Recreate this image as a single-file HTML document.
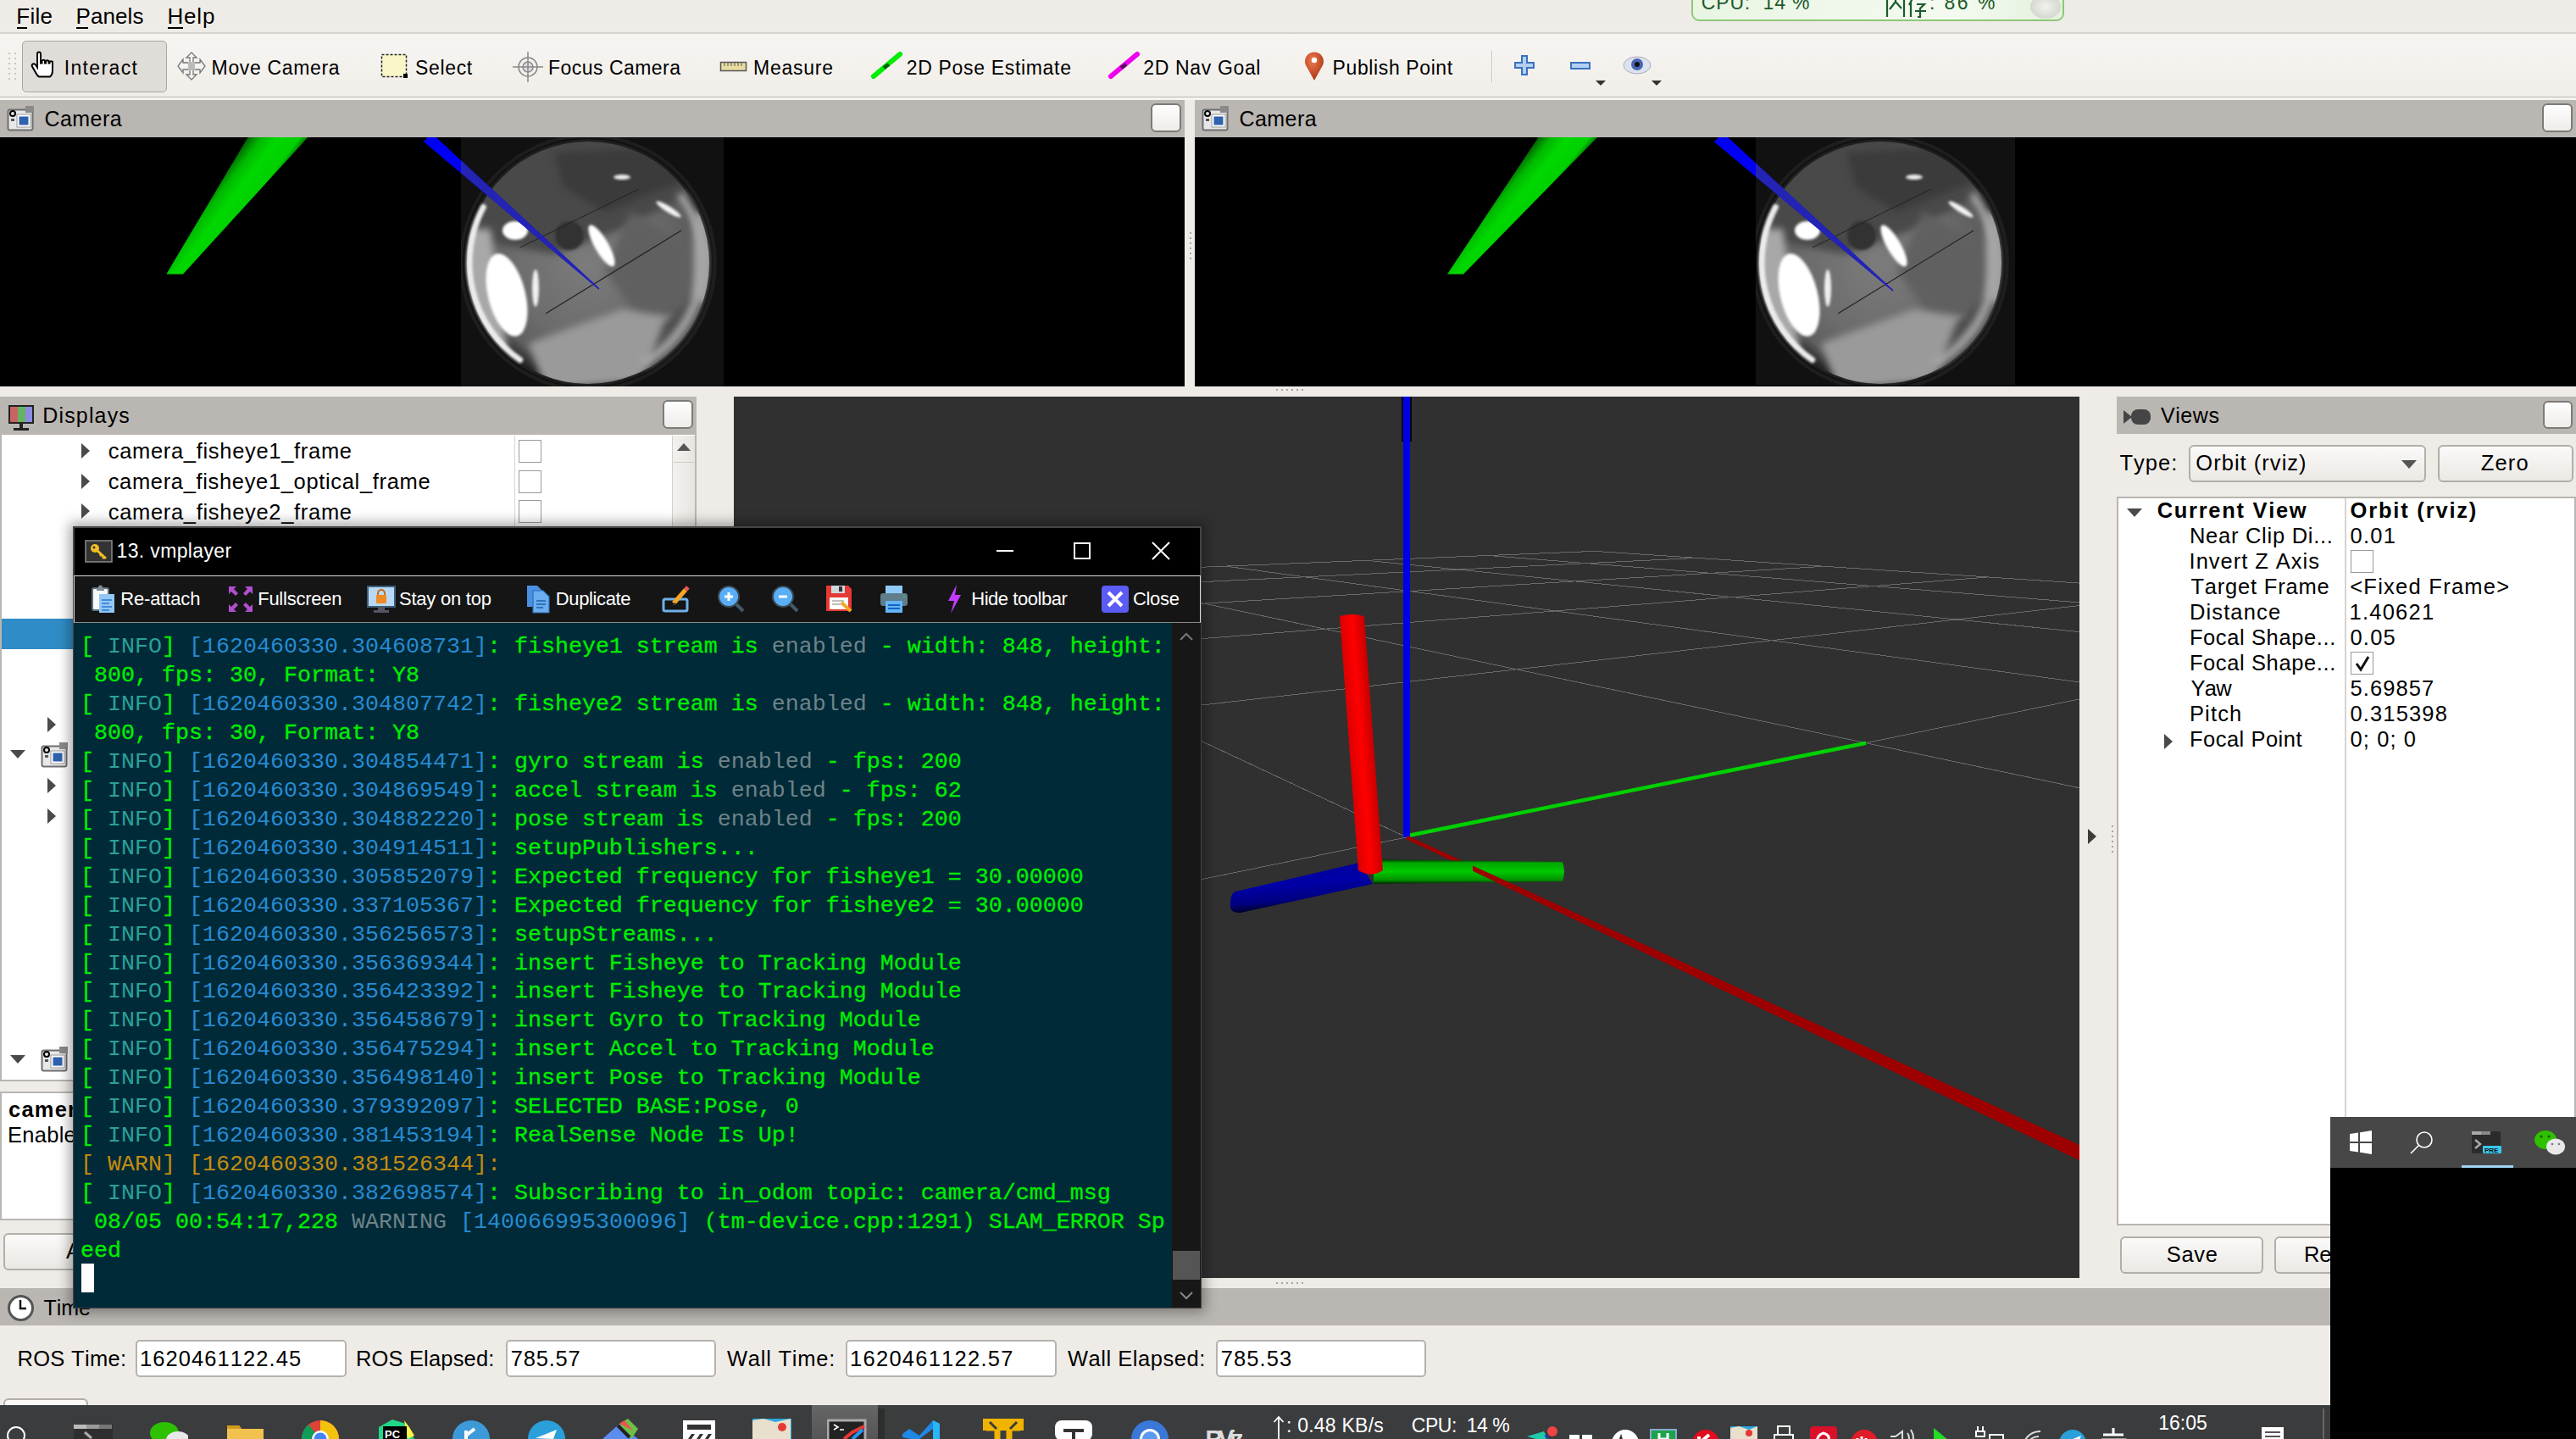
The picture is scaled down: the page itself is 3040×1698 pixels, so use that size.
<!DOCTYPE html>
<html><head><meta charset="utf-8"><style>
html,body{margin:0;padding:0;width:3040px;height:1698px;overflow:hidden;background:#efece8;font-family:'Liberation Sans', sans-serif}
.r{position:absolute;display:block}
.t{position:absolute;white-space:pre;font-kerning:none}
</style></head><body>
<div class="r" style="left:0px;top:0px;width:3040px;height:1698px;background:#efece8"></div><div class="r" style="left:0px;top:0px;width:3040px;height:38px;background:#efece8"></div><div class="r" style="left:0px;top:38px;width:3040px;height:2px;background:#d6d2cd"></div><div class="t" style="left:19.2px;top:6.0px;font-size:26px;line-height:26px;font-weight:400;color:#000;letter-spacing:0.33px;font-family:'Liberation Sans', sans-serif;">File</div><div class="r" style="left:20px;top:32px;width:12px;height:2px;background:#000"></div><div class="t" style="left:89.5px;top:6.0px;font-size:26px;line-height:26px;font-weight:400;color:#000;letter-spacing:0.09px;font-family:'Liberation Sans', sans-serif;">Panels</div><div class="r" style="left:90px;top:32px;width:14px;height:2px;background:#000"></div><div class="t" style="left:197.4px;top:6.0px;font-size:26px;line-height:26px;font-weight:400;color:#000;letter-spacing:0.85px;font-family:'Liberation Sans', sans-serif;">Help</div><div class="r" style="left:198px;top:32px;width:18px;height:2px;background:#000"></div><div class="r" style="left:0px;top:40px;width:3040px;height:74px;background:linear-gradient(#f7f5f2,#f1eee9)"></div><div class="r" style="left:0px;top:114px;width:3040px;height:1px;background:#bcb8b3"></div><div class="r" style="left:0px;top:115px;width:3040px;height:3px;background:#f6f4f0"></div><div class="r" style="left:10px;top:62px;width:2px;height:2px;background:#c9c5c0"></div><div class="r" style="left:17px;top:62px;width:2px;height:2px;background:#c9c5c0"></div><div class="r" style="left:10px;top:68px;width:2px;height:2px;background:#c9c5c0"></div><div class="r" style="left:17px;top:68px;width:2px;height:2px;background:#c9c5c0"></div><div class="r" style="left:10px;top:74px;width:2px;height:2px;background:#c9c5c0"></div><div class="r" style="left:17px;top:74px;width:2px;height:2px;background:#c9c5c0"></div><div class="r" style="left:10px;top:80px;width:2px;height:2px;background:#c9c5c0"></div><div class="r" style="left:17px;top:80px;width:2px;height:2px;background:#c9c5c0"></div><div class="r" style="left:10px;top:86px;width:2px;height:2px;background:#c9c5c0"></div><div class="r" style="left:17px;top:86px;width:2px;height:2px;background:#c9c5c0"></div><div class="r" style="left:10px;top:92px;width:2px;height:2px;background:#c9c5c0"></div><div class="r" style="left:17px;top:92px;width:2px;height:2px;background:#c9c5c0"></div><div class="r" style="left:26px;top:48px;width:171px;height:61px;background:#e0dcd8;border:1px solid #aaa6a1;border-radius:5px;box-sizing:border-box"></div><svg class="r" style="left:34px;top:60px;" width="36" height="36" viewBox="0 0 36 36"><path d="M10 3.5 q0-2 2-2 q2 0 2 2 v11 h1.5 v-3 q1.8-1.5 3.5 0 v3 h1 v-2.5 q1.8-1.5 3.5 0 v2.5 h1 v-1.5 q1.8-1.5 3.5 0 v10 q0 5-3 7.5 h-13 q-2-1-4-5 l-4-7 q-1-2 1-3 q1.5-.7 3 1 l2 3 z" fill="#fff" stroke="#000" stroke-width="2"/></svg><div class="t" style="left:75.7px;top:68.5px;font-size:23px;line-height:23px;font-weight:400;color:#000;letter-spacing:1.37px;font-family:'Liberation Sans', sans-serif;">Interact</div><svg class="r" style="left:208px;top:60px;" width="36" height="36" viewBox="0 0 36 36"><g fill="#f4f4f4" stroke="#777" stroke-width="1.3"><path d="M18 2 l6 6 h-4 v6 h8 v-4 l6 8 l-6 8 v-4 h-8 v6 h4 l-6 6 l-6-6 h4 v-6 h-8 v4 l-6-8 l6-8 v4 h8 v-6 h-4 z"/></g><rect x="14" y="13" width="8" height="10" fill="#bbb"/></svg><div class="t" style="left:249.6px;top:68.5px;font-size:23px;line-height:23px;font-weight:400;color:#000;letter-spacing:0.65px;font-family:'Liberation Sans', sans-serif;">Move Camera</div><svg class="r" style="left:448px;top:62px;" width="36" height="34" viewBox="0 0 36 34"><rect x="2.5" y="2.5" width="29" height="26" fill="#fbf6c8" stroke="#222" stroke-width="1.5" stroke-dasharray="3 2"/><rect x="28" y="25" width="5" height="5" fill="#000"/></svg><div class="t" style="left:490.0px;top:68.5px;font-size:23px;line-height:23px;font-weight:400;color:#000;letter-spacing:0.66px;font-family:'Liberation Sans', sans-serif;">Select</div><svg class="r" style="left:604px;top:60px;" width="38" height="38" viewBox="0 0 38 38"><g fill="none" stroke="#888" stroke-width="1.5"><circle cx="19" cy="19" r="11"/><circle cx="19" cy="19" r="6" fill="#ddd"/><path d="M19 1 v36 M1 19 h36"/></g></svg><div class="t" style="left:647.1px;top:68.5px;font-size:23px;line-height:23px;font-weight:400;color:#000;letter-spacing:0.46px;font-family:'Liberation Sans', sans-serif;">Focus Camera</div><svg class="r" style="left:848px;top:70px;" width="36" height="18" viewBox="0 0 36 18"><rect x="2.5" y="3.5" width="30" height="10" fill="#e8dca0" stroke="#555" stroke-width="1.5"/><path d="M7 4 v4 M11 4 v4 M15 4 v4 M19 4 v4 M23 4 v4 M27 4 v4" stroke="#555" stroke-width="1"/></svg><div class="t" style="left:889.1px;top:68.5px;font-size:23px;line-height:23px;font-weight:400;color:#000;letter-spacing:0.74px;font-family:'Liberation Sans', sans-serif;">Measure</div><svg class="r" style="left:1026px;top:60px;" width="40" height="34" viewBox="0 0 40 34"><path d="M5 30 L36 4" stroke="#00ee00" stroke-width="6" stroke-linecap="round"/><path d="M17 20 l6-4" stroke="#0a5a0a" stroke-width="4"/></svg><div class="t" style="left:1069.8px;top:68.5px;font-size:23px;line-height:23px;font-weight:400;color:#000;letter-spacing:0.67px;font-family:'Liberation Sans', sans-serif;">2D Pose Estimate</div><svg class="r" style="left:1306px;top:60px;" width="40" height="34" viewBox="0 0 40 34"><path d="M5 30 L36 4" stroke="#ee00ee" stroke-width="6" stroke-linecap="round"/><path d="M17 20 l6-4" stroke="#5a0a5a" stroke-width="4"/></svg><div class="t" style="left:1349.3px;top:68.5px;font-size:23px;line-height:23px;font-weight:400;color:#000;letter-spacing:0.65px;font-family:'Liberation Sans', sans-serif;">2D Nav Goal</div><svg class="r" style="left:1536px;top:60px;" width="30" height="36" viewBox="0 0 30 36"><defs><radialGradient id="pin" cx="40%" cy="30%" r="70%"><stop offset="0" stop-color="#f07850"/><stop offset="1" stop-color="#a83a14"/></radialGradient></defs><path d="M15 35 L5 17 A11 11 0 1 1 25 17 Z" fill="url(#pin)"/><circle cx="15" cy="11" r="3.2" fill="#fff"/></svg><div class="t" style="left:1572.6px;top:68.5px;font-size:23px;line-height:23px;font-weight:400;color:#000;letter-spacing:0.61px;font-family:'Liberation Sans', sans-serif;">Publish Point</div><div class="r" style="left:1760px;top:60px;width:1px;height:37px;background:#c9c5c0"></div><div class="r" style="left:1761px;top:60px;width:1px;height:37px;background:#fbfaf8"></div><svg class="r" style="left:1786px;top:64px;" width="28" height="28" viewBox="0 0 28 28"><path d="M10 2 h6 v8 h8 v6 h-8 v8 h-6 v-8 h-8 v-6 h8 z" fill="#b4d0f0" stroke="#3a72c0" stroke-width="2"/></svg><svg class="r" style="left:1852px;top:72px;" width="28" height="12" viewBox="0 0 28 12"><rect x="2" y="2" width="22" height="7" fill="#b4d0f0" stroke="#3a72c0" stroke-width="2"/></svg><svg class="r" style="left:1882px;top:94px;" width="14" height="8" viewBox="0 0 14 8"><path d="M1 1 h12 l-6 6 z" fill="#333"/></svg><svg class="r" style="left:1914px;top:64px;" width="36" height="26" viewBox="0 0 36 26"><ellipse cx="18" cy="13" rx="16" ry="10" fill="#dde3ee" stroke="#aab" stroke-width="1"/><circle cx="18" cy="12" r="7" fill="#4a64b4"/><circle cx="18" cy="12" r="3" fill="#111"/></svg><svg class="r" style="left:1948px;top:94px;" width="14" height="8" viewBox="0 0 14 8"><path d="M1 1 h12 l-6 6 z" fill="#333"/></svg><div class="r" style="left:1996px;top:-12px;width:440px;height:37px;border:2px solid #8cc878;border-radius:9px;box-sizing:border-box;background:linear-gradient(90deg,#e9f5e3,#f4faf0 70%,#e4f1dc)"></div><div class="t" style="left:2007.8px;top:-8.0px;font-size:23px;line-height:23px;font-weight:400;color:#1d5b2b;letter-spacing:0.83px;font-family:'Liberation Sans', sans-serif;">CPU:  14 %</div><svg class="r" style="left:2224px;top:-8px;" width="52" height="30" viewBox="0 0 52 30"><g stroke="#1d5b2b" stroke-width="2.2" fill="none"><path d="M3 6 v22 M3 6 h20 v22 M13 0 v10 l-7 9 M13 10 l7 8"/><path d="M27 5 h22 M36 0 l-7 14 M31 10 v18 M38 13 h9 l-5 5 v10 h-3 M36 21 h13"/></g></svg><div class="t" style="left:2276.9px;top:-8.0px;font-size:23px;line-height:23px;font-weight:400;color:#1d5b2b;letter-spacing:2.46px;font-family:'Liberation Sans', sans-serif;">: 86 %</div><div class="r" style="left:2396px;top:-6px;width:36px;height:28px;border-radius:50%;background:radial-gradient(#f2f2ee,#c8ccc4)"></div><div class="r" style="left:0px;top:118px;width:1398px;height:44px;background:#bab6b2"></div><div class="r" style="left:0px;top:162px;width:1398px;height:294px;background:#000"></div><svg class="r" style="left:8px;top:124px;" width="34" height="32" viewBox="0 0 34 32"><rect x="1.5" y="5.5" width="29" height="24" rx="2" fill="#e8e8e8" stroke="#6e6e6e" stroke-width="2"/><rect x="22" y="1" width="10" height="8" fill="#8a8a8a"/><circle cx="7" cy="10" r="3" fill="none" stroke="#000" stroke-width="2"/><rect x="5" y="16" width="4" height="3" fill="#555"/><rect x="12" y="11" width="16" height="15" fill="#fff" stroke="#999" stroke-width="1"/><rect x="14.5" y="13.5" width="11" height="10" fill="#2f62ae"/></svg><div class="t" style="left:52.4px;top:128.4px;font-size:25px;line-height:25px;font-weight:400;color:#000;letter-spacing:0.47px;font-family:'Liberation Sans', sans-serif;">Camera</div><div class="r" style="left:1410px;top:118px;width:1630px;height:44px;background:#bab6b2"></div><div class="r" style="left:1410px;top:162px;width:1630px;height:294px;background:#000"></div><svg class="r" style="left:1418px;top:124px;" width="34" height="32" viewBox="0 0 34 32"><rect x="1.5" y="5.5" width="29" height="24" rx="2" fill="#e8e8e8" stroke="#6e6e6e" stroke-width="2"/><rect x="22" y="1" width="10" height="8" fill="#8a8a8a"/><circle cx="7" cy="10" r="3" fill="none" stroke="#000" stroke-width="2"/><rect x="5" y="16" width="4" height="3" fill="#555"/><rect x="12" y="11" width="16" height="15" fill="#fff" stroke="#999" stroke-width="1"/><rect x="14.5" y="13.5" width="11" height="10" fill="#2f62ae"/></svg><div class="t" style="left:1462.4px;top:128.4px;font-size:25px;line-height:25px;font-weight:400;color:#000;letter-spacing:0.47px;font-family:'Liberation Sans', sans-serif;">Camera</div><div class="r" style="left:1358px;top:122px;width:36px;height:34px;box-sizing:border-box;border:2px solid #7d7a77;border-radius:6px;background:linear-gradient(#fefefe,#efece9)"></div><div class="r" style="left:3000px;top:122px;width:36px;height:34px;box-sizing:border-box;border:2px solid #7d7a77;border-radius:6px;background:linear-gradient(#fefefe,#efece9)"></div><svg class="r" style="left:544px;top:162px;" width="310" height="294" viewBox="0 0 310 294"><defs>
<filter id="blL" x="-30%" y="-30%" width="160%" height="160%"><feGaussianBlur stdDeviation="4"/></filter>
<filter id="bsL" x="-30%" y="-30%" width="160%" height="160%"><feGaussianBlur stdDeviation="1.5"/></filter>
<radialGradient id="rgL" cx="150" cy="148" r="146" gradientUnits="userSpaceOnUse">
<stop offset="0" stop-color="#7c7c7c"/><stop offset="0.6" stop-color="#6c6c6c"/><stop offset="0.84" stop-color="#5e5e5e"/><stop offset="0.93" stop-color="#363636"/><stop offset="1" stop-color="#1a1a1a"/></radialGradient>
<clipPath id="cpL"><circle cx="150" cy="148" r="143"/></clipPath>
</defs>
<rect width="310" height="294" fill="#111"/>
<circle cx="150" cy="148" r="150" fill="none" stroke="#1e1e1e" stroke-width="4"/>
<circle cx="150" cy="148" r="146" fill="url(#rgL)"/>
<g clip-path="url(#cpL)" transform="rotate(0 150 148)">
<path d="M0 -2 H300 V53 L190 108 L110 138 L0 118 Z" fill="#4a4a4a" filter="url(#blL)"/>
<path d="M110 18 L210 13 L270 48 L170 88 L120 58 Z" fill="#3a3a3a" filter="url(#blL)"/>
<path d="M200 88 L285 133 L275 208 L220 228 L170 158 Z" fill="#606060" filter="url(#blL)"/>
<path d="M80 243 L190 203 L290 218 L210 288 L100 298 Z" fill="#9a9a9a" filter="url(#blL)"/>
<path d="M240 218 L300 168 V298 H210 Z" fill="#4c4c4c" filter="url(#blL)"/>
<path d="M0 108 L35 108 L55 248 L0 288 Z" fill="#a8a8a8" filter="url(#blL)"/>
<path d="M275 88 L300 88 V208 L275 188 Z" fill="#9c9c9c" filter="url(#blL)"/>
<ellipse cx="54" cy="186" rx="22" ry="50" transform="rotate(-14 54 186)" fill="#fff" filter="url(#bsL)"/>
<ellipse cx="64" cy="110" rx="15" ry="11" fill="#fff" filter="url(#bsL)"/>
<ellipse cx="166" cy="128" rx="8" ry="28" transform="rotate(-30 166 128)" fill="#fff" filter="url(#bsL)"/>
<ellipse cx="88" cy="178" rx="4" ry="22" fill="#f0f0f0" filter="url(#bsL)"/>
<ellipse cx="245" cy="85" rx="17" ry="3.5" transform="rotate(32 245 85)" fill="#f4f4f4" filter="url(#bsL)"/>
<ellipse cx="190" cy="47" rx="10" ry="3" fill="#eee" filter="url(#bsL)"/>
<circle cx="128" cy="116" r="17" fill="#333" filter="url(#bsL)"/>
<path d="M100 208 L260 110" stroke="#222" stroke-width="1.2" fill="none"/>
<path d="M70 130 L210 61" stroke="#222" stroke-width="1" fill="none"/>
</g>
<path d="M69.7 262.7 A140 140 0 0 1 26.4 82.3" fill="none" stroke="#ececec" stroke-width="7" stroke-linecap="round" filter="url(#bsL)"/>
<path d="M260.6 70.6 A135 135 0 0 1 217.5 264.9" fill="none" stroke="#a8a8a8" stroke-width="10" stroke-linecap="round" filter="url(#blL)"/></svg><svg class="r" style="left:2072px;top:162px;" width="306" height="293" viewBox="0 0 306 293"><defs>
<filter id="blR" x="-30%" y="-30%" width="160%" height="160%"><feGaussianBlur stdDeviation="4"/></filter>
<filter id="bsR" x="-30%" y="-30%" width="160%" height="160%"><feGaussianBlur stdDeviation="1.5"/></filter>
<radialGradient id="rgR" cx="147" cy="148" r="146" gradientUnits="userSpaceOnUse">
<stop offset="0" stop-color="#7c7c7c"/><stop offset="0.6" stop-color="#6c6c6c"/><stop offset="0.84" stop-color="#5e5e5e"/><stop offset="0.93" stop-color="#363636"/><stop offset="1" stop-color="#1a1a1a"/></radialGradient>
<clipPath id="cpR"><circle cx="147" cy="148" r="143"/></clipPath>
</defs>
<rect width="306" height="293" fill="#111"/>
<circle cx="147" cy="148" r="150" fill="none" stroke="#1e1e1e" stroke-width="4"/>
<circle cx="147" cy="148" r="146" fill="url(#rgR)"/>
<g clip-path="url(#cpR)" transform="rotate(0 147 148)">
<path d="M-3 -2 H297 V53 L187 108 L107 138 L-3 118 Z" fill="#4a4a4a" filter="url(#blR)"/>
<path d="M107 18 L207 13 L267 48 L167 88 L117 58 Z" fill="#3a3a3a" filter="url(#blR)"/>
<path d="M197 88 L282 133 L272 208 L217 228 L167 158 Z" fill="#606060" filter="url(#blR)"/>
<path d="M77 243 L187 203 L287 218 L207 288 L97 298 Z" fill="#9a9a9a" filter="url(#blR)"/>
<path d="M237 218 L297 168 V298 H207 Z" fill="#4c4c4c" filter="url(#blR)"/>
<path d="M-3 108 L32 108 L52 248 L-3 288 Z" fill="#a8a8a8" filter="url(#blR)"/>
<path d="M272 88 L297 88 V208 L272 188 Z" fill="#9c9c9c" filter="url(#blR)"/>
<ellipse cx="51" cy="186" rx="22" ry="50" transform="rotate(-14 51 186)" fill="#fff" filter="url(#bsR)"/>
<ellipse cx="61" cy="110" rx="15" ry="11" fill="#fff" filter="url(#bsR)"/>
<ellipse cx="163" cy="128" rx="8" ry="28" transform="rotate(-30 163 128)" fill="#fff" filter="url(#bsR)"/>
<ellipse cx="85" cy="178" rx="4" ry="22" fill="#f0f0f0" filter="url(#bsR)"/>
<ellipse cx="242" cy="85" rx="17" ry="3.5" transform="rotate(32 242 85)" fill="#f4f4f4" filter="url(#bsR)"/>
<ellipse cx="187" cy="47" rx="10" ry="3" fill="#eee" filter="url(#bsR)"/>
<circle cx="125" cy="116" r="17" fill="#333" filter="url(#bsR)"/>
<path d="M97 208 L257 110" stroke="#222" stroke-width="1.2" fill="none"/>
<path d="M67 130 L207 61" stroke="#222" stroke-width="1" fill="none"/>
</g>
<path d="M66.7 262.7 A140 140 0 0 1 23.4 82.3" fill="none" stroke="#ececec" stroke-width="7" stroke-linecap="round" filter="url(#bsR)"/>
<path d="M257.6 70.6 A135 135 0 0 1 214.5 264.9" fill="none" stroke="#a8a8a8" stroke-width="10" stroke-linecap="round" filter="url(#blR)"/></svg><svg class="r" style="left:0px;top:162px;" width="1398" height="294" viewBox="0 0 1398 294"><defs><linearGradient id="gcL" gradientUnits="userSpaceOnUse" x1="304.3" y1="-17.8" x2="351.5" y2="17.8"><stop offset="0" stop-color="#005a00"/><stop offset="0.25" stop-color="#00b800"/><stop offset="0.5" stop-color="#00d800"/><stop offset="0.85" stop-color="#00d000"/><stop offset="1" stop-color="#007000"/></linearGradient><clipPath id="ciL"><rect x="544" y="0" width="400" height="300"/></clipPath></defs>
<path d="M292.6 0 L363.2 0 L216 161.5 L196.3 161.5 Z" fill="url(#gcL)"/>
<path d="M499.9 5.2 L706.6 179.4 L707.4 178.6 L509.1 -5.2 Z" fill="#0000f4"/>
<path d="M499.9 5.2 L706.6 179.4 L707.4 178.6 L509.1 -5.2 Z" fill="#2424b4" clip-path="url(#ciL)"/></svg><svg class="r" style="left:1410px;top:162px;" width="1630" height="294" viewBox="0 0 1630 294"><defs><linearGradient id="gcR" gradientUnits="userSpaceOnUse" x1="418.5" y1="-17.9" x2="462.0" y2="17.9"><stop offset="0" stop-color="#005a00"/><stop offset="0.25" stop-color="#00b800"/><stop offset="0.5" stop-color="#00d800"/><stop offset="0.85" stop-color="#00d000"/><stop offset="1" stop-color="#007000"/></linearGradient><clipPath id="ciR"><rect x="662" y="0" width="400" height="300"/></clipPath></defs>
<path d="M405.5 0 L475 0 L317 161.5 L298 161.5 Z" fill="url(#gcR)"/>
<path d="M613.0 5.6 L823.6 181.5 L824.4 180.5 L623.0 -5.6 Z" fill="#0000f4"/>
<path d="M613.0 5.6 L823.6 181.5 L824.4 180.5 L623.0 -5.6 Z" fill="#2424b4" clip-path="url(#ciR)"/></svg><div class="r" style="left:1404px;top:274px;width:2px;height:2px;background:#a8a5a1"></div><div class="r" style="left:1404px;top:280px;width:2px;height:2px;background:#a8a5a1"></div><div class="r" style="left:1404px;top:286px;width:2px;height:2px;background:#a8a5a1"></div><div class="r" style="left:1404px;top:292px;width:2px;height:2px;background:#a8a5a1"></div><div class="r" style="left:1404px;top:298px;width:2px;height:2px;background:#a8a5a1"></div><div class="r" style="left:1404px;top:304px;width:2px;height:2px;background:#a8a5a1"></div><div class="r" style="left:1506px;top:459px;width:2px;height:2px;background:#a8a5a1"></div><div class="r" style="left:1506px;top:1513px;width:2px;height:2px;background:#a8a5a1"></div><div class="r" style="left:1512px;top:459px;width:2px;height:2px;background:#a8a5a1"></div><div class="r" style="left:1512px;top:1513px;width:2px;height:2px;background:#a8a5a1"></div><div class="r" style="left:1518px;top:459px;width:2px;height:2px;background:#a8a5a1"></div><div class="r" style="left:1518px;top:1513px;width:2px;height:2px;background:#a8a5a1"></div><div class="r" style="left:1524px;top:459px;width:2px;height:2px;background:#a8a5a1"></div><div class="r" style="left:1524px;top:1513px;width:2px;height:2px;background:#a8a5a1"></div><div class="r" style="left:1530px;top:459px;width:2px;height:2px;background:#a8a5a1"></div><div class="r" style="left:1530px;top:1513px;width:2px;height:2px;background:#a8a5a1"></div><div class="r" style="left:1536px;top:459px;width:2px;height:2px;background:#a8a5a1"></div><div class="r" style="left:1536px;top:1513px;width:2px;height:2px;background:#a8a5a1"></div><div class="r" style="left:0px;top:468px;width:822px;height:45px;background:#bab6b2"></div><svg class="r" style="left:8px;top:476px;" width="34" height="34" viewBox="0 0 34 34"><rect x="2" y="2" width="30" height="22" fill="#222"/><rect x="4" y="4" width="9" height="18" fill="#c86464"/><rect x="13" y="4" width="9" height="18" fill="#64b464"/><rect x="22" y="4" width="8" height="18" fill="#8c8ce0"/><rect x="15" y="24" width="4" height="5" fill="#222"/><rect x="8" y="29" width="18" height="3" fill="#222"/></svg><div class="t" style="left:50.3px;top:477.8px;font-size:25px;line-height:25px;font-weight:400;color:#000;letter-spacing:1.15px;font-family:'Liberation Sans', sans-serif;">Displays</div><div class="r" style="left:782px;top:472px;width:36px;height:34px;box-sizing:border-box;border:2px solid #7d7a77;border-radius:6px;background:linear-gradient(#fefefe,#efece9)"></div><div class="r" style="left:0px;top:513px;width:822px;height:763px;background:#fff;border:2px solid #b9b5b1;border-top:none;box-sizing:border-box"></div><div class="r" style="left:607px;top:514px;width:1px;height:109px;background:#d8d5d2"></div><div class="r" style="left:793px;top:514px;width:27px;height:760px;background:linear-gradient(90deg,#f4f2ef,#e8e5e1)"></div><div class="r" style="left:793px;top:514px;width:1px;height:760px;background:#d3d0cc"></div><svg class="r" style="left:797px;top:520px;" width="20" height="14" viewBox="0 0 20 14"><path d="M2 12 h16 l-8-9 z" fill="#555"/></svg><div class="r" style="left:795px;top:545px;width:24px;height:1px;background:#cfcbc6"></div><svg class="r" style="left:95px;top:521.7px;" width="12" height="20" viewBox="0 0 12 20"><path d="M1 1 L11 10 L1 19 Z" fill="#4a4a4a"/></svg><div class="t" style="left:127.7px;top:520.1px;font-size:25.5px;line-height:25.5px;font-weight:400;color:#000;letter-spacing:0.69px;font-family:'Liberation Sans', sans-serif;">camera_fisheye1_frame</div><div class="r" style="left:612px;top:519px;width:27px;height:27px;border:1px solid #9c9995;background:#fff;box-sizing:border-box"></div><svg class="r" style="left:95px;top:557.6px;" width="12" height="20" viewBox="0 0 12 20"><path d="M1 1 L11 10 L1 19 Z" fill="#4a4a4a"/></svg><div class="t" style="left:127.7px;top:556.0px;font-size:25.5px;line-height:25.5px;font-weight:400;color:#000;letter-spacing:0.66px;font-family:'Liberation Sans', sans-serif;">camera_fisheye1_optical_frame</div><div class="r" style="left:612px;top:555px;width:27px;height:27px;border:1px solid #9c9995;background:#fff;box-sizing:border-box"></div><svg class="r" style="left:95px;top:593.4px;" width="12" height="20" viewBox="0 0 12 20"><path d="M1 1 L11 10 L1 19 Z" fill="#4a4a4a"/></svg><div class="t" style="left:127.7px;top:591.8px;font-size:25.5px;line-height:25.5px;font-weight:400;color:#000;letter-spacing:0.69px;font-family:'Liberation Sans', sans-serif;">camera_fisheye2_frame</div><div class="r" style="left:612px;top:590px;width:27px;height:27px;border:1px solid #9c9995;background:#fff;box-sizing:border-box"></div><div class="r" style="left:2px;top:730px;width:790px;height:36px;background:#308cc6"></div><svg class="r" style="left:55px;top:845px;" width="12" height="20" viewBox="0 0 12 20"><path d="M1 1 L11 10 L1 19 Z" fill="#4a4a4a"/></svg><svg class="r" style="left:11px;top:884px;" width="20" height="12" viewBox="0 0 20 12"><path d="M1 1 L19 1 L10 11 Z" fill="#4a4a4a"/></svg><svg class="r" style="left:48px;top:875px;" width="34" height="32" viewBox="0 0 34 32"><rect x="1.5" y="5.5" width="29" height="24" rx="2" fill="#e8e8e8" stroke="#6e6e6e" stroke-width="2"/><rect x="22" y="1" width="10" height="8" fill="#8a8a8a"/><circle cx="7" cy="10" r="3" fill="none" stroke="#000" stroke-width="2"/><rect x="5" y="16" width="4" height="3" fill="#555"/><rect x="12" y="11" width="16" height="15" fill="#fff" stroke="#999" stroke-width="1"/><rect x="14.5" y="13.5" width="11" height="10" fill="#2f62ae"/></svg><svg class="r" style="left:55px;top:917px;" width="12" height="20" viewBox="0 0 12 20"><path d="M1 1 L11 10 L1 19 Z" fill="#4a4a4a"/></svg><svg class="r" style="left:55px;top:953px;" width="12" height="20" viewBox="0 0 12 20"><path d="M1 1 L11 10 L1 19 Z" fill="#4a4a4a"/></svg><svg class="r" style="left:11px;top:1244px;" width="20" height="12" viewBox="0 0 20 12"><path d="M1 1 L19 1 L10 11 Z" fill="#4a4a4a"/></svg><svg class="r" style="left:48px;top:1234px;" width="34" height="32" viewBox="0 0 34 32"><rect x="1.5" y="5.5" width="29" height="24" rx="2" fill="#e8e8e8" stroke="#6e6e6e" stroke-width="2"/><rect x="22" y="1" width="10" height="8" fill="#8a8a8a"/><circle cx="7" cy="10" r="3" fill="none" stroke="#000" stroke-width="2"/><rect x="5" y="16" width="4" height="3" fill="#555"/><rect x="12" y="11" width="16" height="15" fill="#fff" stroke="#999" stroke-width="1"/><rect x="14.5" y="13.5" width="11" height="10" fill="#2f62ae"/></svg><div class="r" style="left:0px;top:1276px;width:822px;height:12px;background:#efece8"></div><div class="r" style="left:0px;top:1288px;width:822px;height:152px;background:#fff;border:2px solid #b9b5b1;box-sizing:border-box"></div><div class="t" style="left:10.0px;top:1296.9px;font-size:25.5px;line-height:25.5px;font-weight:700;color:#000;letter-spacing:1.20px;font-family:'Liberation Sans', sans-serif;">camera_fisheye2_frame</div><div class="t" style="left:8.9px;top:1327.4px;font-size:25.5px;line-height:25.5px;font-weight:400;color:#000;letter-spacing:0.30px;font-family:'Liberation Sans', sans-serif;">Enabled</div><div class="r" style="left:4px;top:1455px;width:400px;height:44px;border:2px solid #b2aea9;border-radius:6px;box-sizing:border-box;background:linear-gradient(#fbfaf9,#ebe8e4)"></div><div class="t" style="left:78.0px;top:1464.4px;font-size:25.5px;line-height:25.5px;font-weight:400;color:#000;letter-spacing:0.30px;font-family:'Liberation Sans', sans-serif;">Add</div><div class="r" style="left:4px;top:1650px;width:100px;height:44px;border:2px solid #b2aea9;border-radius:6px;box-sizing:border-box;background:linear-gradient(#fbfaf9,#ebe8e4)"></div><div class="r" style="left:2498px;top:468px;width:542px;height:44px;background:#bab6b2"></div><svg class="r" style="left:2504px;top:482px;" width="36" height="20" viewBox="0 0 36 20"><path d="M2 2 L12 10 L2 18 Z" fill="#454545"/><rect x="11" y="1" width="23" height="18" rx="8" fill="#454545"/></svg><div class="t" style="left:2549.9px;top:477.8px;font-size:25px;line-height:25px;font-weight:400;color:#000;letter-spacing:0.58px;font-family:'Liberation Sans', sans-serif;">Views</div><div class="r" style="left:3001px;top:473px;width:35px;height:33px;box-sizing:border-box;border:2px solid #7d7a77;border-radius:6px;background:linear-gradient(#fefefe,#efece9)"></div><div class="t" style="left:2501.4px;top:534.4px;font-size:25.5px;line-height:25.5px;font-weight:400;color:#000;letter-spacing:1.03px;font-family:'Liberation Sans', sans-serif;">Type:</div><div class="r" style="left:2583px;top:525px;width:280px;height:44px;border:2px solid #b2aea9;border-radius:6px;box-sizing:border-box;background:linear-gradient(#fbfaf9,#ebe8e4)"></div><div class="t" style="left:2591.3px;top:534.4px;font-size:25.5px;line-height:25.5px;font-weight:400;color:#000;letter-spacing:1.03px;font-family:'Liberation Sans', sans-serif;">Orbit (rviz)</div><svg class="r" style="left:2833px;top:542px;" width="20" height="12" viewBox="0 0 20 12"><path d="M1 1 h18 l-9 10 z" fill="#555"/></svg><div class="r" style="left:2877px;top:525px;width:160px;height:44px;border:2px solid #b2aea9;border-radius:6px;box-sizing:border-box;background:linear-gradient(#fbfaf9,#ebe8e4)"></div><div class="t" style="left:2927.8px;top:534.4px;font-size:25.5px;line-height:25.5px;font-weight:400;color:#000;letter-spacing:1.12px;font-family:'Liberation Sans', sans-serif;">Zero</div><div class="r" style="left:2498px;top:586px;width:542px;height:860px;background:#fff;border:2px solid #b9b5b1;box-sizing:border-box"></div><div class="r" style="left:2767px;top:588px;width:2px;height:856px;background:#d6d3cf"></div><svg class="r" style="left:2509px;top:599px;" width="20" height="12" viewBox="0 0 20 12"><path d="M1 1 L19 1 L10 11 Z" fill="#4a4a4a"/></svg><div class="t" style="left:2545.7px;top:589.9px;font-size:25.5px;line-height:25.5px;font-weight:700;color:#000;letter-spacing:1.70px;font-family:'Liberation Sans', sans-serif;">Current View</div><div class="t" style="left:2773.5px;top:589.9px;font-size:25.5px;line-height:25.5px;font-weight:700;color:#000;letter-spacing:1.81px;font-family:'Liberation Sans', sans-serif;">Orbit (rviz)</div><div class="t" style="left:2583.9px;top:619.9px;font-size:25.5px;line-height:25.5px;font-weight:400;color:#000;letter-spacing:0.74px;font-family:'Liberation Sans', sans-serif;">Near Clip Di...</div><div class="t" style="left:2773.5px;top:619.9px;font-size:25.5px;line-height:25.5px;font-weight:400;color:#000;letter-spacing:1.24px;font-family:'Liberation Sans', sans-serif;">0.01</div><div class="t" style="left:2583.6px;top:650.0px;font-size:25.5px;line-height:25.5px;font-weight:400;color:#000;letter-spacing:0.97px;font-family:'Liberation Sans', sans-serif;">Invert Z Axis</div><div class="r" style="left:2774px;top:649px;width:27px;height:27px;border:1px solid #9c9995;background:#fff;box-sizing:border-box"></div><div class="t" style="left:2585.4px;top:680.0px;font-size:25.5px;line-height:25.5px;font-weight:400;color:#000;letter-spacing:0.80px;font-family:'Liberation Sans', sans-serif;">Target Frame</div><div class="t" style="left:2773.2px;top:680.0px;font-size:25.5px;line-height:25.5px;font-weight:400;color:#000;letter-spacing:1.26px;font-family:'Liberation Sans', sans-serif;">&lt;Fixed Frame&gt;</div><div class="t" style="left:2583.9px;top:710.1px;font-size:25.5px;line-height:25.5px;font-weight:400;color:#000;letter-spacing:1.14px;font-family:'Liberation Sans', sans-serif;">Distance</div><div class="t" style="left:2772.6px;top:710.1px;font-size:25.5px;line-height:25.5px;font-weight:400;color:#000;letter-spacing:1.22px;font-family:'Liberation Sans', sans-serif;">1.40621</div><div class="t" style="left:2583.9px;top:740.1px;font-size:25.5px;line-height:25.5px;font-weight:400;color:#000;letter-spacing:0.61px;font-family:'Liberation Sans', sans-serif;">Focal Shape...</div><div class="t" style="left:2773.5px;top:740.1px;font-size:25.5px;line-height:25.5px;font-weight:400;color:#000;letter-spacing:1.18px;font-family:'Liberation Sans', sans-serif;">0.05</div><div class="t" style="left:2583.9px;top:770.2px;font-size:25.5px;line-height:25.5px;font-weight:400;color:#000;letter-spacing:0.61px;font-family:'Liberation Sans', sans-serif;">Focal Shape...</div><div class="r" style="left:2774px;top:769px;width:27px;height:27px;border:1px solid #9c9995;background:#fff;box-sizing:border-box"></div><svg class="r" style="left:2776px;top:770.75px;" width="24" height="24" viewBox="0 0 24 24"><path d="M5 12 L10 19 L19 4" fill="none" stroke="#111" stroke-width="3"/></svg><div class="t" style="left:2585.4px;top:800.2px;font-size:25.5px;line-height:25.5px;font-weight:400;color:#000;letter-spacing:-0.65px;font-family:'Liberation Sans', sans-serif;">Yaw</div><div class="t" style="left:2773.5px;top:800.2px;font-size:25.5px;line-height:25.5px;font-weight:400;color:#000;letter-spacing:1.07px;font-family:'Liberation Sans', sans-serif;">5.69857</div><div class="t" style="left:2583.9px;top:830.3px;font-size:25.5px;line-height:25.5px;font-weight:400;color:#000;letter-spacing:1.16px;font-family:'Liberation Sans', sans-serif;">Pitch</div><div class="t" style="left:2773.5px;top:830.3px;font-size:25.5px;line-height:25.5px;font-weight:400;color:#000;letter-spacing:1.14px;font-family:'Liberation Sans', sans-serif;">0.315398</div><div class="t" style="left:2583.9px;top:860.3px;font-size:25.5px;line-height:25.5px;font-weight:400;color:#000;letter-spacing:0.51px;font-family:'Liberation Sans', sans-serif;">Focal Point</div><div class="t" style="left:2773.5px;top:860.3px;font-size:25.5px;line-height:25.5px;font-weight:400;color:#000;letter-spacing:1.10px;font-family:'Liberation Sans', sans-serif;">0; 0; 0</div><svg class="r" style="left:2553px;top:865px;" width="12" height="20" viewBox="0 0 12 20"><path d="M1 1 L11 10 L1 19 Z" fill="#4a4a4a"/></svg><div class="r" style="left:2502px;top:1459px;width:169px;height:44px;border:2px solid #b2aea9;border-radius:6px;box-sizing:border-box;background:linear-gradient(#fbfaf9,#ebe8e4)"></div><div class="t" style="left:2556.8px;top:1467.9px;font-size:25.5px;line-height:25.5px;font-weight:400;color:#000;letter-spacing:0.66px;font-family:'Liberation Sans', sans-serif;">Save</div><div class="r" style="left:2684px;top:1459px;width:169px;height:44px;border:2px solid #b2aea9;border-radius:6px;box-sizing:border-box;background:linear-gradient(#fbfaf9,#ebe8e4)"></div><div class="t" style="left:2718.9px;top:1467.9px;font-size:25.5px;line-height:25.5px;font-weight:400;color:#000;letter-spacing:0.00px;font-family:'Liberation Sans', sans-serif;">Remove</div><svg class="r" style="left:2463px;top:977px;" width="14" height="20" viewBox="0 0 14 20"><path d="M1 1 L11 10 L1 19 Z" fill="#3e3d3b"/></svg><div class="r" style="left:2492px;top:974px;width:2px;height:2px;background:#a9a6a2"></div><div class="r" style="left:2492px;top:980px;width:2px;height:2px;background:#a9a6a2"></div><div class="r" style="left:2492px;top:986px;width:2px;height:2px;background:#a9a6a2"></div><div class="r" style="left:2492px;top:992px;width:2px;height:2px;background:#a9a6a2"></div><div class="r" style="left:2492px;top:998px;width:2px;height:2px;background:#a9a6a2"></div><div class="r" style="left:2492px;top:1004px;width:2px;height:2px;background:#a9a6a2"></div><svg class="r" style="left:866px;top:468px;overflow:hidden" width="1588" height="1040" viewBox="0 0 1588 1040"><rect width="1588" height="1040" fill="#303030"/>
<path d="M-2372.7 320.1 L1015.5 182.4 M-2372.7 320.1 L-126042.1 11630.6 M-3303.0 405.2 L1136.1 190.4 M-1544.9 286.4 L-95934.1 11630.6 M-5503.2 606.4 L1286.5 200.3 M-945.9 262.1 L-65826.1 11630.6 M-17170.7 1673.5 L1479.5 213.0 M-492.3 243.7 L-35718.1 11630.6 M-98824.9 11630.6 L1735.8 229.8 M-137.0 229.3 L-5610.0 11630.6 M-53329.8 11630.6 L2093.0 253.3 M148.9 217.6 L24498.0 11630.6 M-7834.6 11630.6 L2625.3 288.3 M383.9 208.1 L54606.0 11630.6 M37660.6 11630.6 L3502.8 346.1 M580.5 200.1 L84714.1 11630.6 M83155.8 11630.6 L5223.1 459.2 M747.4 193.3 L114822.1 11630.6 M128651.0 11630.6 L10121.2 781.5 M890.9 187.5 L144930.1 11630.6 M174146.2 11630.6 L133509.9 8898.7 M1015.5 182.4 L133509.9 8898.7" stroke="#6a6a6c" stroke-width="1" fill="none" shape-rendering="crispEdges"/>
<path d="M796.0 518.0 L1336.2 408.7" stroke="#00cf00" stroke-width="4.5" />
<rect x="788.0" y="0" width="12" height="53" fill="#000010"/><rect x="790.0" y="0" width="8" height="520.0" fill="#0000e6"/>
<defs>
<linearGradient id="cylR" gradientUnits="userSpaceOnUse" x1="1580" y1="0" x2="1633" y2="0" gradientTransform="rotate(-4.3 1606 875)"><stop offset="0" stop-color="#300000"/><stop offset="0.2" stop-color="#d80000"/><stop offset="0.5" stop-color="#ff0000"/><stop offset="0.8" stop-color="#c00000"/><stop offset="1" stop-color="#200000"/></linearGradient>
<linearGradient id="cylG" x1="0" y1="0" x2="0" y2="1"><stop offset="0" stop-color="#003000"/><stop offset="0.15" stop-color="#00a800"/><stop offset="0.5" stop-color="#00c800"/><stop offset="0.85" stop-color="#009000"/><stop offset="1" stop-color="#002000"/></linearGradient>
<linearGradient id="cylB" x1="0" y1="0" x2="0.25" y2="1"><stop offset="0" stop-color="#000030"/><stop offset="0.2" stop-color="#00009a"/><stop offset="0.5" stop-color="#0000a8"/><stop offset="0.8" stop-color="#000080"/><stop offset="1" stop-color="#000010"/></linearGradient>
</defs>
<g transform="translate(-866 -468)">
<path d="M1458 1052 L1604 1018 L1620 1043 L1464 1077 Q1450 1078 1452 1066 Q1452 1054 1458 1052 Z" fill="url(#cylB)"/>
<path d="M1659.0 990.0 L2785.0 1526.9 L2793.9 1507.9 L1661.0 986.0 Z" fill="#9c0000"/>
<path d="M1621 1014 L1844 1017 Q1848 1029 1844 1040 L1621 1043 Z" fill="url(#cylG)"/>

<clipPath id="rclip"><rect x="1738" y="900" width="800" height="700"/></clipPath><path d="M1659.0 990.0 L2785.0 1526.9 L2793.9 1507.9 L1661.0 986.0 Z" fill="#9c0000" clip-path="url(#rclip)"/>
<path d="M1581 727 Q1595 723 1610 727 L1632 1027 Q1618 1036 1603 1027 Z" fill="url(#cylR)"/>
</g></svg><div class="r" style="left:0px;top:1520px;width:2750px;height:44px;background:#bab6b2"></div><svg class="r" style="left:8px;top:1527px;" width="33" height="33" viewBox="0 0 33 33"><circle cx="16.5" cy="16.5" r="14" fill="#fff" stroke="#555" stroke-width="3"/><path d="M16 7 v10 h7" fill="none" stroke="#111" stroke-width="2.5"/></svg><div class="t" style="left:51.4px;top:1530.8px;font-size:25px;line-height:25px;font-weight:400;color:#000;letter-spacing:0.00px;font-family:'Liberation Sans', sans-serif;">Time</div><div class="t" style="left:20.4px;top:1591.4px;font-size:25.5px;line-height:25.5px;font-weight:400;color:#000;letter-spacing:0.32px;font-family:'Liberation Sans', sans-serif;">ROS Time:</div><div class="r" style="left:160px;top:1581px;width:249px;height:44px;border:2px solid #b6b2ae;border-radius:5px;box-sizing:border-box;background:#fff"></div><div class="t" style="left:165.1px;top:1591.4px;font-size:25.5px;line-height:25.5px;font-weight:400;color:#000;letter-spacing:1.06px;font-family:'Liberation Sans', sans-serif;">1620461122.45</div><div class="t" style="left:419.9px;top:1591.4px;font-size:25.5px;line-height:25.5px;font-weight:400;color:#000;letter-spacing:0.17px;font-family:'Liberation Sans', sans-serif;">ROS Elapsed:</div><div class="r" style="left:597px;top:1581px;width:248px;height:44px;border:2px solid #b6b2ae;border-radius:5px;box-sizing:border-box;background:#fff"></div><div class="t" style="left:602.7px;top:1591.4px;font-size:25.5px;line-height:25.5px;font-weight:400;color:#000;letter-spacing:0.80px;font-family:'Liberation Sans', sans-serif;">785.57</div><div class="t" style="left:857.9px;top:1591.4px;font-size:25.5px;line-height:25.5px;font-weight:400;color:#000;letter-spacing:0.78px;font-family:'Liberation Sans', sans-serif;">Wall Time:</div><div class="r" style="left:998px;top:1581px;width:249px;height:44px;border:2px solid #b6b2ae;border-radius:5px;box-sizing:border-box;background:#fff"></div><div class="t" style="left:1003.1px;top:1591.4px;font-size:25.5px;line-height:25.5px;font-weight:400;color:#000;letter-spacing:1.25px;font-family:'Liberation Sans', sans-serif;">1620461122.57</div><div class="t" style="left:1259.9px;top:1591.4px;font-size:25.5px;line-height:25.5px;font-weight:400;color:#000;letter-spacing:0.54px;font-family:'Liberation Sans', sans-serif;">Wall Elapsed:</div><div class="r" style="left:1435px;top:1581px;width:248px;height:44px;border:2px solid #b6b2ae;border-radius:5px;box-sizing:border-box;background:#fff"></div><div class="t" style="left:1440.7px;top:1591.4px;font-size:25.5px;line-height:25.5px;font-weight:400;color:#000;letter-spacing:1.09px;font-family:'Liberation Sans', sans-serif;">785.53</div><div class="r" style="left:0px;top:1658px;width:2750px;height:40px;background:#3b3c3e"></div><div class="r" style="left:2741px;top:1662px;width:2px;height:36px;background:#666"></div><div class="r" style="left:2750px;top:1378px;width:290px;height:320px;background:#000"></div><div class="r" style="left:2750px;top:1318px;width:290px;height:60px;background:#474747"></div><div class="r" style="left:2905px;top:1375px;width:61px;height:3px;background:#9fd3f5"></div><svg class="r" style="left:2772px;top:1334px;" width="28" height="28" viewBox="0 0 28 28"><path d="M1 4 L11 2.5 V13 H1 Z M13 2.2 L27 0 V13 H13 Z M1 15 H11 V25.5 L1 24 Z M13 15 H27 V28 L13 25.8 Z" fill="#fff"/></svg><svg class="r" style="left:2844px;top:1334px;" width="28" height="28" viewBox="0 0 28 28"><circle cx="17" cy="11" r="9" fill="none" stroke="#fff" stroke-width="1.6"/><path d="M11 17 L1 27" stroke="#fff" stroke-width="1.6"/></svg><svg class="r" style="left:2915px;top:1334px;" width="40" height="30" viewBox="0 0 40 30"><rect x="2" y="1" width="34" height="26" rx="2" fill="#2b2b2b"/><rect x="2" y="1" width="11" height="4" fill="#aaa"/><rect x="13" y="1" width="11" height="4" fill="#888"/><path d="M6 11 l6 5 l-6 5" fill="none" stroke="#aaa" stroke-width="2.5"/><rect x="15" y="18" width="22" height="9" rx="1" fill="#3ac8f0"/><text x="17" y="26" font-size="8" font-family="Liberation Sans" font-weight="bold" fill="#111">PRE</text></svg><svg class="r" style="left:2990px;top:1332px;" width="40" height="34" viewBox="0 0 40 34"><ellipse cx="14" cy="13" rx="13" ry="11" fill="#2dc100"/><ellipse cx="26" cy="21" rx="11" ry="9.5" fill="#e8e8e8"/><circle cx="9" cy="9" r="1.6" fill="#1a5c00"/><circle cx="18" cy="9" r="1.6" fill="#1a5c00"/><circle cx="22" cy="18" r="1.3" fill="#777"/><circle cx="30" cy="18" r="1.3" fill="#777"/></svg><svg class="r" style="left:6px;top:1674px;" width="48" height="30" viewBox="0 0 48 30"><circle cx="13" cy="20" r="10" fill="none" stroke="#fff" stroke-width="2"/></svg><svg class="r" style="left:86px;top:1674px;" width="48" height="30" viewBox="0 0 48 30"><rect x="1" y="7" width="46" height="20" fill="#2e2e2e"/><rect x="1" y="7" width="15" height="5" fill="#bbb"/><rect x="16" y="7" width="15" height="5" fill="#999"/><rect x="31" y="7" width="15" height="5" fill="#777"/><path d="M14 16 l8 7" stroke="#aaa" stroke-width="3"/></svg><svg class="r" style="left:174px;top:1674px;" width="48" height="30" viewBox="0 0 48 30"><ellipse cx="20" cy="17" rx="17" ry="13" fill="#2dc100"/><ellipse cx="36" cy="25" rx="14" ry="10" fill="#e8e8e8"/></svg><svg class="r" style="left:266px;top:1674px;" width="48" height="30" viewBox="0 0 48 30"><path d="M2 8 h14 l3 4 h26 v14 h-43 z" fill="#f2c14e"/><path d="M2 8 h14 l3 4 h-17 z" fill="#d49a1a"/></svg><svg class="r" style="left:354px;top:1674px;" width="48" height="30" viewBox="0 0 48 30"><circle cx="24" cy="24" r="22" fill="#db4437"/><path d="M24 24 L5 35 A22 22 0 0 1 10 7 Z" fill="#0f9d58"/><path d="M24 2 A22 22 0 0 1 46 24 L24 24 Z" fill="#f4c20d"/><circle cx="24" cy="24" r="10" fill="#fff"/><circle cx="24" cy="24" r="7.5" fill="#4285f4"/></svg><svg class="r" style="left:443px;top:1674px;" width="48" height="30" viewBox="0 0 48 30"><path d="M4 10 L20 1 L36 6 L46 24 L4 24 Z" fill="#21d789"/><path d="M34 2 L40 10 L46 20 L38 24 Z" fill="#fcf84a"/><rect x="9" y="9" width="28" height="15" fill="#000"/><text x="11" y="23" font-size="13" font-weight="bold" font-family="Liberation Sans" fill="#fff">PC</text></svg><svg class="r" style="left:533px;top:1674px;" width="48" height="30" viewBox="0 0 48 30"><circle cx="23" cy="24" r="22" fill="#3d9ad8"/><path d="M17 14 v10 M17 20 L27 12" stroke="#fff" stroke-width="4"/></svg><svg class="r" style="left:622px;top:1674px;" width="48" height="30" viewBox="0 0 48 30"><circle cx="23" cy="24" r="22" fill="#2aa0da"/><path d="M10 23 L35 13 L31 24" fill="#fff"/></svg><svg class="r" style="left:707px;top:1674px;" width="48" height="30" viewBox="0 0 48 30"><path d="M4 24 L24 6 L46 24 Z" fill="#5b8def"/><path d="M24 6 L34 0 L46 12 L38 24 Z" fill="#6cc04a"/><path d="M24 6 L30 2 L40 14 Z" fill="#ef5350"/><path d="M22 8 L36 22" stroke="#222" stroke-width="4"/></svg><svg class="r" style="left:804px;top:1674px;" width="48" height="30" viewBox="0 0 48 30"><rect x="2" y="2" width="38" height="22" fill="#fff"/><rect x="7" y="7" width="28" height="6" fill="#333"/><path d="M8 24 l4-6 h4 l-4 6 M18 24 l4-6 h4 l-4 6 M28 24 l4-6 h4 l-4 6" fill="#333"/></svg><svg class="r" style="left:887px;top:1674px;" width="48" height="30" viewBox="0 0 48 30"><rect x="1" y="0" width="46" height="24" fill="#2aa8e0"/><path d="M1 2 L14 0 L28 4 L46 0 V24 H1 Z" fill="#e8e0cc"/><circle cx="36" cy="10" r="5" fill="#e53935"/></svg><div class="r" style="left:958px;top:1658px;width:78px;height:40px;background:linear-gradient(#666,#555)"></div><div class="r" style="left:1036px;top:1662px;width:8px;height:36px;background:#2e2e2e"></div><svg class="r" style="left:976px;top:1674px;" width="48" height="30" viewBox="0 0 48 30"><rect x="1" y="2" width="44" height="24" fill="#222" stroke="#aaa" stroke-width="3"/><path d="M8 7 l5 3 l-5 3" fill="none" stroke="#fff" stroke-width="1.6"/><path d="M15 13 h5" stroke="#fff" stroke-width="1.5"/><path d="M20 24 L30 16 L44 9" stroke="#e53935" stroke-width="4"/><path d="M30 24 L42 13" stroke="#2196f3" stroke-width="4"/></svg><svg class="r" style="left:1063px;top:1674px;" width="48" height="30" viewBox="0 0 48 30"><path d="M2 18 L10 12 L22 20 L38 2 L46 6 V24 H38 V12 L22 24 L12 24 L2 22 Z" fill="#1e88e5"/><path d="M38 2 L46 6 V24 H38 Z" fill="#29b6f6"/></svg><svg class="r" style="left:1160px;top:1674px;" width="48" height="30" viewBox="0 0 48 30"><rect x="0" y="0" width="48" height="14" fill="#f0b400"/><path d="M4 0 v14 h10 v10 h6 v-10 M28 14 v10 h6 v-10 h10 v-14" fill="#f0b400" stroke="#f0b400"/><path d="M8 4 l8 8 M40 4 l-8 8" stroke="#3b3c3e" stroke-width="3"/></svg><svg class="r" style="left:1243px;top:1674px;" width="48" height="30" viewBox="0 0 48 30"><rect x="2" y="2" width="44" height="24" rx="8" fill="#fff"/><path d="M12 14 h24 M24 14 v12" stroke="#333" stroke-width="4"/></svg><svg class="r" style="left:1333px;top:1674px;" width="48" height="30" viewBox="0 0 48 30"><circle cx="24" cy="24" r="22" fill="#3a78d8"/><circle cx="24" cy="24" r="12" fill="#fff"/><circle cx="24" cy="24" r="9" fill="#5a9aee"/></svg><div class="t" style="left:1422.6px;top:1684.3px;font-size:28px;line-height:28px;font-weight:700;color:#ddd;letter-spacing:-5.26px;font-family:'Liberation Sans', sans-serif;">RViz</div><svg class="r" style="left:1502px;top:1670px;" width="14" height="28" viewBox="0 0 14 28"><path d="M7 2 V28 M1.5 8 L7 2 L12.5 8" fill="none" stroke="#fff" stroke-width="1.8"/></svg><div class="t" style="left:1517.9px;top:1670.5px;font-size:23px;line-height:23px;font-weight:400;color:#fff;letter-spacing:0.24px;font-family:'Liberation Sans', sans-serif;">: 0.48 KB/s</div><div class="t" style="left:1665.8px;top:1670.5px;font-size:23px;line-height:23px;font-weight:400;color:#fff;letter-spacing:-0.46px;font-family:'Liberation Sans', sans-serif;">CPU:  14 %</div><svg class="r" style="left:1800px;top:1681px;" width="48" height="30" viewBox="0 0 48 30"><path d="M2 14 L22 8 L30 22 Z" fill="#1ec8a8"/><circle cx="32" cy="8" r="6" fill="#ef4444"/><path d="M24 12 L30 24" stroke="#1e40af" stroke-width="3"/></svg><svg class="r" style="left:1850px;top:1681px;" width="48" height="30" viewBox="0 0 48 30"><rect x="2" y="12" width="12" height="10" fill="#fff"/><rect x="17" y="12" width="12" height="10" fill="#fff"/></svg><svg class="r" style="left:1898px;top:1681px;" width="48" height="30" viewBox="0 0 48 30"><circle cx="20" cy="22" r="16" fill="#fff"/><path d="M6 22 h6 l3-8 l4 14 l3-8 h6" stroke="#333" stroke-width="2" fill="none"/></svg><svg class="r" style="left:1946px;top:1681px;" width="48" height="30" viewBox="0 0 48 30"><rect x="2" y="6" width="30" height="20" fill="#1aa34a" stroke="#8ac" stroke-width="2"/><path d="M12 10 v14 M22 10 v14 M12 17 h10" stroke="#fff" stroke-width="3"/></svg><svg class="r" style="left:1993px;top:1681px;" width="48" height="30" viewBox="0 0 48 30"><circle cx="20" cy="22" r="16" fill="#e30b1c"/><path d="M12 14 v14 M12 22 L24 12" stroke="#fff" stroke-width="4"/></svg><svg class="r" style="left:2040px;top:1681px;" width="48" height="30" viewBox="0 0 48 30"><rect x="2" y="2" width="32" height="24" fill="#2aa8e0"/><path d="M2 4 L12 2 L24 6 L34 2 V26 H2 Z" fill="#e8e0cc"/><circle cx="24" cy="10" r="4" fill="#e53935"/></svg><svg class="r" style="left:2090px;top:1681px;" width="48" height="30" viewBox="0 0 48 30"><path d="M8 2 h14 v10 h-14 z M4 12 h22 v14 h-22 z" fill="none" stroke="#fff" stroke-width="2"/></svg><svg class="r" style="left:2134px;top:1681px;" width="48" height="30" viewBox="0 0 48 30"><rect x="2" y="2" width="32" height="24" rx="4" fill="#d8102a"/><path d="M10 22 q0-10 8-12 q8 2 6 10" stroke="#fff" stroke-width="3" fill="none"/></svg><svg class="r" style="left:2180px;top:1681px;" width="48" height="30" viewBox="0 0 48 30"><circle cx="20" cy="22" r="16" fill="#e11d2a"/><path d="M12 24 v-8 M17 24 v-10 M22 24 v-8 M27 24 v-5" stroke="#fff" stroke-width="3"/></svg><svg class="r" style="left:2227px;top:1681px;" width="48" height="30" viewBox="0 0 48 30"><path d="M4 14 h6 l8-6 v18 M24 10 q4 6 0 12 M28 6 q6 10 0 18" fill="none" stroke="#ddd" stroke-width="2"/></svg><svg class="r" style="left:2280px;top:1681px;" width="48" height="30" viewBox="0 0 48 30"><path d="M2 4 L26 24 L2 24 Z" fill="#22dd22"/></svg><svg class="r" style="left:2328px;top:1681px;" width="48" height="30" viewBox="0 0 48 30"><path d="M6 2 v6 M12 2 v6 M4 8 h10 v6 h-10 z M20 12 h16 v12 h-16 z" stroke="#fff" stroke-width="2" fill="none"/></svg><svg class="r" style="left:2384px;top:1681px;" width="48" height="30" viewBox="0 0 48 30"><path d="M4 22 q6-14 20-14 M8 24 q4-10 14-10" stroke="#ddd" stroke-width="2" fill="none"/></svg><svg class="r" style="left:2426px;top:1681px;" width="48" height="30" viewBox="0 0 48 30"><circle cx="20" cy="22" r="16" fill="#2aa0da"/><path d="M8 22 L30 13 L26 24 Z" fill="#fff"/><circle cx="30" cy="24" r="5" fill="#e53935"/></svg><svg class="r" style="left:2474px;top:1681px;" width="48" height="30" viewBox="0 0 48 30"><path d="M8 12 h24 M20 4 v8 M6 18 h28 v8 M6 18 v8" stroke="#fff" stroke-width="3" fill="none"/></svg><div class="t" style="left:2547.2px;top:1668.2px;font-size:23px;line-height:23px;font-weight:400;color:#fff;letter-spacing:0.04px;font-family:'Liberation Sans', sans-serif;">16:05</div><svg class="r" style="left:2667px;top:1674px;" width="48" height="30" viewBox="0 0 48 30"><rect x="2" y="10" width="26" height="16" fill="#fff"/><path d="M6 16 h18 M6 21 h18" stroke="#555" stroke-width="2"/></svg><div class="r" style="left:86px;top:621px;width:1332px;height:923px;background:#000;border:2px solid #454545;box-sizing:border-box;box-shadow:0 0 14px 4px rgba(0,0,0,0.35)"></div><svg class="r" style="left:100px;top:637px;" width="33" height="27" viewBox="0 0 33 27"><rect x="1" y="1" width="31" height="25" fill="#333" stroke="#8a8a8a" stroke-width="1.5"/><circle cx="12" cy="10" r="5" fill="#f4bd24"/><circle cx="11" cy="9" r="1.5" fill="#333"/><path d="M14 12 L25 22 M20 17 l-2 2 M23 20 l-2 2" stroke="#f4bd24" stroke-width="3"/></svg><div class="t" style="left:137.5px;top:639.0px;font-size:23px;line-height:23px;font-weight:400;color:#fff;letter-spacing:0.36px;font-family:'Liberation Sans', sans-serif;">13. vmplayer</div><div class="r" style="left:1176px;top:649px;width:20px;height:2px;background:#fff"></div><div class="r" style="left:1267px;top:640px;width:20px;height:20px;border:2px solid #fff;box-sizing:border-box"></div><svg class="r" style="left:1358px;top:638px;" width="24" height="24" viewBox="0 0 24 24"><path d="M2 2 L22 22 M22 2 L2 22" stroke="#fff" stroke-width="2"/></svg><div class="r" style="left:87px;top:679px;width:1330px;height:56px;background:#151515;border:1.5px solid #d8d8d8;border-bottom-color:#8a8a8a;box-sizing:border-box"></div><svg class="r" style="left:106px;top:690px;" width="32" height="36" viewBox="0 0 32 36"><rect x="3" y="4" width="19" height="26" rx="2" fill="#f8f8f8" stroke="#5c6f7c" stroke-width="2"/><path d="M8 4 h9 v3 h-9 z" fill="#7d8c96"/><circle cx="12.5" cy="3" r="2.5" fill="#7d8c96"/><rect x="11" y="11" width="18" height="22" fill="#93c8f5"/><path d="M14 18 h12 M14 22 h9 M14 26 h12 M14 30 h9" stroke="#2a78d0" stroke-width="1.5"/></svg><div class="t" style="left:142.2px;top:696.4px;font-size:22px;line-height:22px;font-weight:400;color:#fff;letter-spacing:-0.14px;font-family:'Liberation Sans', sans-serif;">Re-attach</div><svg class="r" style="left:268px;top:690px;" width="32" height="34" viewBox="0 0 32 34"><g fill="#b04fd0"><path d="M2 2 h9 l-3 3 l5 5 l-3 3 l-5-5 l-3 3 z"/><path d="M30 2 h-9 l3 3 l-5 5 l3 3 l5-5 l3 3 z"/><path d="M2 32 h9 l-3-3 l5-5 l-3-3 l-5 5 l-3-3 z"/><path d="M30 32 h-9 l3-3 l-5-5 l3-3 l5 5 l3-3 z"/></g></svg><div class="t" style="left:304.2px;top:696.4px;font-size:22px;line-height:22px;font-weight:400;color:#fff;letter-spacing:-0.25px;font-family:'Liberation Sans', sans-serif;">Fullscreen</div><svg class="r" style="left:432px;top:690px;" width="36" height="34" viewBox="0 0 36 34"><rect x="2" y="2" width="32" height="24" fill="#b7d9f5" stroke="#3d5f7a" stroke-width="2"/><rect x="14" y="26" width="8" height="4" fill="#556"/><rect x="9" y="30" width="18" height="3" fill="#556"/><path d="M14 13 v-3 a4 4 0 0 1 8 0 v3" fill="none" stroke="#c76a1a" stroke-width="2"/><rect x="12" y="12" width="12" height="10" rx="1" fill="#f08a24"/></svg><div class="t" style="left:471.0px;top:696.4px;font-size:22px;line-height:22px;font-weight:400;color:#fff;letter-spacing:-0.24px;font-family:'Liberation Sans', sans-serif;">Stay on top</div><svg class="r" style="left:619px;top:689px;" width="34" height="36" viewBox="0 0 34 36"><path d="M3 2 h12 l7 7 v18 h-19 z" fill="#4a90e2"/><path d="M10 8 h12 l7 7 v19 h-19 z" fill="#6aaef0" stroke="#2f6fb8" stroke-width="1.2"/><path d="M14 20 h11 M14 24 h11 M14 28 h8" stroke="#1f5fa8" stroke-width="1.6"/></svg><div class="t" style="left:655.8px;top:696.4px;font-size:22px;line-height:22px;font-weight:400;color:#fff;letter-spacing:-0.37px;font-family:'Liberation Sans', sans-serif;">Duplicate</div><svg class="r" style="left:781px;top:690px;" width="36" height="34" viewBox="0 0 36 34"><rect x="2" y="17" width="28" height="14" rx="2" fill="none" stroke="#6fb1ea" stroke-width="3"/><path d="M14 22 L28 6" stroke="#f5a623" stroke-width="5"/><path d="M28 6 l3-3" stroke="#e55" stroke-width="5"/><path d="M12 25 l3-4 l3 2 z" fill="#333"/></svg><svg class="r" style="left:846px;top:690px;" width="34" height="34" viewBox="0 0 34 34"><path d="M20 20 L31 31" stroke="#445866" stroke-width="4"/><circle cx="14" cy="14" r="12" fill="#5aaef5" stroke="#3a4a55" stroke-width="2"/><path d="M9 14 h10 M14 9 v10" stroke="#fff" stroke-width="3"/></svg><svg class="r" style="left:910px;top:690px;" width="34" height="34" viewBox="0 0 34 34"><path d="M20 20 L31 31" stroke="#445866" stroke-width="4"/><circle cx="14" cy="14" r="12" fill="#5aaef5" stroke="#3a4a55" stroke-width="2"/><path d="M9 14 h10" stroke="#fff" stroke-width="3"/></svg><svg class="r" style="left:973px;top:689px;" width="36" height="36" viewBox="0 0 36 36"><path d="M2 2 h26 l4 4 v26 h-30 z" fill="#e53935"/><rect x="8" y="2" width="16" height="9" fill="#cfd8dc"/><rect x="17" y="3" width="4" height="6" fill="#333"/><rect x="6" y="16" width="22" height="14" fill="#fff"/><path d="M9 20 h14 M9 24 h10" stroke="#aaa" stroke-width="1.5"/><path d="M20 22 L31 32" stroke="#f5a623" stroke-width="4"/></svg><svg class="r" style="left:1037px;top:689px;" width="36" height="36" viewBox="0 0 36 36"><rect x="8" y="2" width="20" height="10" fill="#90caf9"/><rect x="2" y="11" width="32" height="15" rx="3" fill="#607d8b"/><rect x="8" y="20" width="20" height="14" fill="#64b5f6"/><path d="M11 25 h14 M11 29 h14" stroke="#1565c0" stroke-width="1.8"/><circle cx="30" cy="15" r="1.2" fill="#4caf50"/></svg><svg class="r" style="left:1115px;top:689px;" width="22" height="36" viewBox="0 0 22 36"><path d="M14 1 L4 20 h7 l-4 15 L19 13 h-7 z" fill="#c23cff"/></svg><div class="t" style="left:1146.2px;top:696.4px;font-size:22px;line-height:22px;font-weight:400;color:#fff;letter-spacing:-0.45px;font-family:'Liberation Sans', sans-serif;">Hide toolbar</div><svg class="r" style="left:1299px;top:690px;" width="34" height="34" viewBox="0 0 34 34"><rect x="1" y="1" width="32" height="32" rx="4" fill="#5b5bf5"/><path d="M9 9 L25 25 M25 9 L9 25" stroke="#fff" stroke-width="4"/></svg><div class="t" style="left:1336.9px;top:696.4px;font-size:22px;line-height:22px;font-weight:400;color:#fff;letter-spacing:-0.29px;font-family:'Liberation Sans', sans-serif;">Close</div><div class="r" style="left:87px;top:735px;width:1296px;height:808px;background:#012a38"></div><div class="r" style="left:1383px;top:735px;width:34px;height:808px;background:#171717"></div><svg class="r" style="left:1390px;top:744px;" width="20" height="14" viewBox="0 0 20 14"><path d="M3 11 L10 4 L17 11" fill="none" stroke="#777" stroke-width="2"/></svg><div class="r" style="left:1384px;top:1476px;width:32px;height:34px;background:#555"></div><svg class="r" style="left:1390px;top:1522px;" width="20" height="14" viewBox="0 0 20 14"><path d="M3 3 L10 10 L17 3" fill="none" stroke="#888" stroke-width="2"/></svg><div class="t" style="left:95px;top:750.4px;font-family:'Liberation Mono', monospace;font-size:26.67px;line-height:26.67px"><span style="color:#00ef00;-webkit-text-stroke:0.3px #00ef00">[</span><span style="color:#2aa198"> INFO</span><span style="color:#00ef00;-webkit-text-stroke:0.3px #00ef00">]</span><span style="color:#00ef00;-webkit-text-stroke:0.3px #00ef00"> </span><span style="color:#268bd2">[1620460330.304608731]</span><span style="color:#00ef00;-webkit-text-stroke:0.3px #00ef00">: </span><span style="color:#00ef00;-webkit-text-stroke:0.3px #00ef00">fisheye1 stream is </span><span style="color:#6e8389">enabled</span><span style="color:#00ef00;-webkit-text-stroke:0.3px #00ef00"> - width: 848, height:</span></div><div class="t" style="left:95px;top:784.3px;font-family:'Liberation Mono', monospace;font-size:26.67px;line-height:26.67px"><span style="color:#00ef00;-webkit-text-stroke:0.3px #00ef00"> 800, fps: 30, Format: Y8</span></div><div class="t" style="left:95px;top:818.2px;font-family:'Liberation Mono', monospace;font-size:26.67px;line-height:26.67px"><span style="color:#00ef00;-webkit-text-stroke:0.3px #00ef00">[</span><span style="color:#2aa198"> INFO</span><span style="color:#00ef00;-webkit-text-stroke:0.3px #00ef00">]</span><span style="color:#00ef00;-webkit-text-stroke:0.3px #00ef00"> </span><span style="color:#268bd2">[1620460330.304807742]</span><span style="color:#00ef00;-webkit-text-stroke:0.3px #00ef00">: </span><span style="color:#00ef00;-webkit-text-stroke:0.3px #00ef00">fisheye2 stream is </span><span style="color:#6e8389">enabled</span><span style="color:#00ef00;-webkit-text-stroke:0.3px #00ef00"> - width: 848, height:</span></div><div class="t" style="left:95px;top:852.1px;font-family:'Liberation Mono', monospace;font-size:26.67px;line-height:26.67px"><span style="color:#00ef00;-webkit-text-stroke:0.3px #00ef00"> 800, fps: 30, Format: Y8</span></div><div class="t" style="left:95px;top:886.0px;font-family:'Liberation Mono', monospace;font-size:26.67px;line-height:26.67px"><span style="color:#00ef00;-webkit-text-stroke:0.3px #00ef00">[</span><span style="color:#2aa198"> INFO</span><span style="color:#00ef00;-webkit-text-stroke:0.3px #00ef00">]</span><span style="color:#00ef00;-webkit-text-stroke:0.3px #00ef00"> </span><span style="color:#268bd2">[1620460330.304854471]</span><span style="color:#00ef00;-webkit-text-stroke:0.3px #00ef00">: </span><span style="color:#00ef00;-webkit-text-stroke:0.3px #00ef00">gyro stream is </span><span style="color:#6e8389">enabled</span><span style="color:#00ef00;-webkit-text-stroke:0.3px #00ef00"> - fps: 200</span></div><div class="t" style="left:95px;top:920.0px;font-family:'Liberation Mono', monospace;font-size:26.67px;line-height:26.67px"><span style="color:#00ef00;-webkit-text-stroke:0.3px #00ef00">[</span><span style="color:#2aa198"> INFO</span><span style="color:#00ef00;-webkit-text-stroke:0.3px #00ef00">]</span><span style="color:#00ef00;-webkit-text-stroke:0.3px #00ef00"> </span><span style="color:#268bd2">[1620460330.304869549]</span><span style="color:#00ef00;-webkit-text-stroke:0.3px #00ef00">: </span><span style="color:#00ef00;-webkit-text-stroke:0.3px #00ef00">accel stream is </span><span style="color:#6e8389">enabled</span><span style="color:#00ef00;-webkit-text-stroke:0.3px #00ef00"> - fps: 62</span></div><div class="t" style="left:95px;top:953.9px;font-family:'Liberation Mono', monospace;font-size:26.67px;line-height:26.67px"><span style="color:#00ef00;-webkit-text-stroke:0.3px #00ef00">[</span><span style="color:#2aa198"> INFO</span><span style="color:#00ef00;-webkit-text-stroke:0.3px #00ef00">]</span><span style="color:#00ef00;-webkit-text-stroke:0.3px #00ef00"> </span><span style="color:#268bd2">[1620460330.304882220]</span><span style="color:#00ef00;-webkit-text-stroke:0.3px #00ef00">: </span><span style="color:#00ef00;-webkit-text-stroke:0.3px #00ef00">pose stream is </span><span style="color:#6e8389">enabled</span><span style="color:#00ef00;-webkit-text-stroke:0.3px #00ef00"> - fps: 200</span></div><div class="t" style="left:95px;top:987.8px;font-family:'Liberation Mono', monospace;font-size:26.67px;line-height:26.67px"><span style="color:#00ef00;-webkit-text-stroke:0.3px #00ef00">[</span><span style="color:#2aa198"> INFO</span><span style="color:#00ef00;-webkit-text-stroke:0.3px #00ef00">]</span><span style="color:#00ef00;-webkit-text-stroke:0.3px #00ef00"> </span><span style="color:#268bd2">[1620460330.304914511]</span><span style="color:#00ef00;-webkit-text-stroke:0.3px #00ef00">: setupPublishers...</span></div><div class="t" style="left:95px;top:1021.7px;font-family:'Liberation Mono', monospace;font-size:26.67px;line-height:26.67px"><span style="color:#00ef00;-webkit-text-stroke:0.3px #00ef00">[</span><span style="color:#2aa198"> INFO</span><span style="color:#00ef00;-webkit-text-stroke:0.3px #00ef00">]</span><span style="color:#00ef00;-webkit-text-stroke:0.3px #00ef00"> </span><span style="color:#268bd2">[1620460330.305852079]</span><span style="color:#00ef00;-webkit-text-stroke:0.3px #00ef00">: Expected frequency for fisheye1 = 30.00000</span></div><div class="t" style="left:95px;top:1055.6px;font-family:'Liberation Mono', monospace;font-size:26.67px;line-height:26.67px"><span style="color:#00ef00;-webkit-text-stroke:0.3px #00ef00">[</span><span style="color:#2aa198"> INFO</span><span style="color:#00ef00;-webkit-text-stroke:0.3px #00ef00">]</span><span style="color:#00ef00;-webkit-text-stroke:0.3px #00ef00"> </span><span style="color:#268bd2">[1620460330.337105367]</span><span style="color:#00ef00;-webkit-text-stroke:0.3px #00ef00">: Expected frequency for fisheye2 = 30.00000</span></div><div class="t" style="left:95px;top:1089.6px;font-family:'Liberation Mono', monospace;font-size:26.67px;line-height:26.67px"><span style="color:#00ef00;-webkit-text-stroke:0.3px #00ef00">[</span><span style="color:#2aa198"> INFO</span><span style="color:#00ef00;-webkit-text-stroke:0.3px #00ef00">]</span><span style="color:#00ef00;-webkit-text-stroke:0.3px #00ef00"> </span><span style="color:#268bd2">[1620460330.356256573]</span><span style="color:#00ef00;-webkit-text-stroke:0.3px #00ef00">: setupStreams...</span></div><div class="t" style="left:95px;top:1123.5px;font-family:'Liberation Mono', monospace;font-size:26.67px;line-height:26.67px"><span style="color:#00ef00;-webkit-text-stroke:0.3px #00ef00">[</span><span style="color:#2aa198"> INFO</span><span style="color:#00ef00;-webkit-text-stroke:0.3px #00ef00">]</span><span style="color:#00ef00;-webkit-text-stroke:0.3px #00ef00"> </span><span style="color:#268bd2">[1620460330.356369344]</span><span style="color:#00ef00;-webkit-text-stroke:0.3px #00ef00">: insert Fisheye to Tracking Module</span></div><div class="t" style="left:95px;top:1157.4px;font-family:'Liberation Mono', monospace;font-size:26.67px;line-height:26.67px"><span style="color:#00ef00;-webkit-text-stroke:0.3px #00ef00">[</span><span style="color:#2aa198"> INFO</span><span style="color:#00ef00;-webkit-text-stroke:0.3px #00ef00">]</span><span style="color:#00ef00;-webkit-text-stroke:0.3px #00ef00"> </span><span style="color:#268bd2">[1620460330.356423392]</span><span style="color:#00ef00;-webkit-text-stroke:0.3px #00ef00">: insert Fisheye to Tracking Module</span></div><div class="t" style="left:95px;top:1191.3px;font-family:'Liberation Mono', monospace;font-size:26.67px;line-height:26.67px"><span style="color:#00ef00;-webkit-text-stroke:0.3px #00ef00">[</span><span style="color:#2aa198"> INFO</span><span style="color:#00ef00;-webkit-text-stroke:0.3px #00ef00">]</span><span style="color:#00ef00;-webkit-text-stroke:0.3px #00ef00"> </span><span style="color:#268bd2">[1620460330.356458679]</span><span style="color:#00ef00;-webkit-text-stroke:0.3px #00ef00">: insert Gyro to Tracking Module</span></div><div class="t" style="left:95px;top:1225.2px;font-family:'Liberation Mono', monospace;font-size:26.67px;line-height:26.67px"><span style="color:#00ef00;-webkit-text-stroke:0.3px #00ef00">[</span><span style="color:#2aa198"> INFO</span><span style="color:#00ef00;-webkit-text-stroke:0.3px #00ef00">]</span><span style="color:#00ef00;-webkit-text-stroke:0.3px #00ef00"> </span><span style="color:#268bd2">[1620460330.356475294]</span><span style="color:#00ef00;-webkit-text-stroke:0.3px #00ef00">: insert Accel to Tracking Module</span></div><div class="t" style="left:95px;top:1259.2px;font-family:'Liberation Mono', monospace;font-size:26.67px;line-height:26.67px"><span style="color:#00ef00;-webkit-text-stroke:0.3px #00ef00">[</span><span style="color:#2aa198"> INFO</span><span style="color:#00ef00;-webkit-text-stroke:0.3px #00ef00">]</span><span style="color:#00ef00;-webkit-text-stroke:0.3px #00ef00"> </span><span style="color:#268bd2">[1620460330.356498140]</span><span style="color:#00ef00;-webkit-text-stroke:0.3px #00ef00">: insert Pose to Tracking Module</span></div><div class="t" style="left:95px;top:1293.1px;font-family:'Liberation Mono', monospace;font-size:26.67px;line-height:26.67px"><span style="color:#00ef00;-webkit-text-stroke:0.3px #00ef00">[</span><span style="color:#2aa198"> INFO</span><span style="color:#00ef00;-webkit-text-stroke:0.3px #00ef00">]</span><span style="color:#00ef00;-webkit-text-stroke:0.3px #00ef00"> </span><span style="color:#268bd2">[1620460330.379392097]</span><span style="color:#00ef00;-webkit-text-stroke:0.3px #00ef00">: SELECTED BASE:Pose, 0</span></div><div class="t" style="left:95px;top:1327.0px;font-family:'Liberation Mono', monospace;font-size:26.67px;line-height:26.67px"><span style="color:#00ef00;-webkit-text-stroke:0.3px #00ef00">[</span><span style="color:#2aa198"> INFO</span><span style="color:#00ef00;-webkit-text-stroke:0.3px #00ef00">]</span><span style="color:#00ef00;-webkit-text-stroke:0.3px #00ef00"> </span><span style="color:#268bd2">[1620460330.381453194]</span><span style="color:#00ef00;-webkit-text-stroke:0.3px #00ef00">: RealSense Node Is Up!</span></div><div class="t" style="left:95px;top:1360.9px;font-family:'Liberation Mono', monospace;font-size:26.67px;line-height:26.67px"><span style="color:#c48c10">[ WARN] [1620460330.381526344]:</span></div><div class="t" style="left:95px;top:1394.8px;font-family:'Liberation Mono', monospace;font-size:26.67px;line-height:26.67px"><span style="color:#00ef00;-webkit-text-stroke:0.3px #00ef00">[</span><span style="color:#2aa198"> INFO</span><span style="color:#00ef00;-webkit-text-stroke:0.3px #00ef00">]</span><span style="color:#00ef00;-webkit-text-stroke:0.3px #00ef00"> </span><span style="color:#268bd2">[1620460330.382698574]</span><span style="color:#00ef00;-webkit-text-stroke:0.3px #00ef00">: Subscribing to in_odom topic: camera/cmd_msg</span></div><div class="t" style="left:95px;top:1428.8px;font-family:'Liberation Mono', monospace;font-size:26.67px;line-height:26.67px"><span style="color:#00ef00;-webkit-text-stroke:0.3px #00ef00"> 08/05 00:54:17,228 </span><span style="color:#6e8389">WARNING</span><span style="color:#00ef00;-webkit-text-stroke:0.3px #00ef00"> </span><span style="color:#268bd2">[140066995300096]</span><span style="color:#00ef00;-webkit-text-stroke:0.3px #00ef00"> (tm-device.cpp:1291) SLAM_ERROR Sp</span></div><div class="t" style="left:95px;top:1462.7px;font-family:'Liberation Mono', monospace;font-size:26.67px;line-height:26.67px"><span style="color:#00ef00;-webkit-text-stroke:0.3px #00ef00">eed</span></div><div class="r" style="left:96px;top:1491px;width:15px;height:34px;background:#fff"></div>
</body></html>
